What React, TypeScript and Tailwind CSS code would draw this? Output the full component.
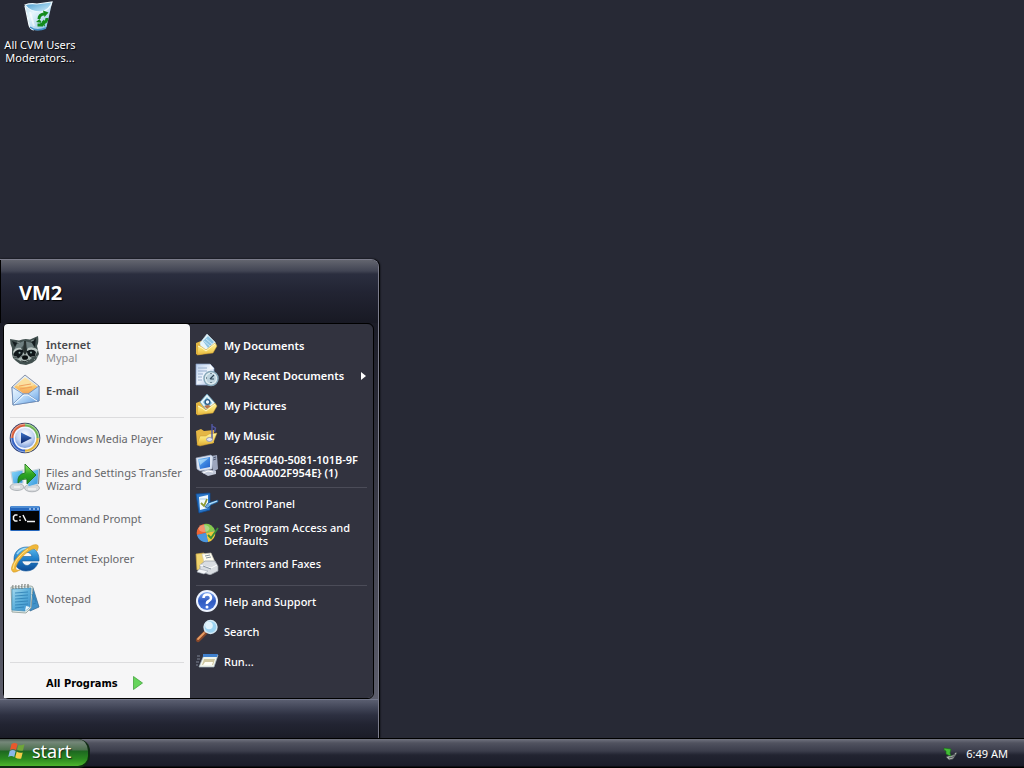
import type { ReactNode } from 'react';

type IconProps = { className?: string };

function Grad({ id, stops, diagonal }: { id: string; stops: string[]; diagonal?: boolean }) {
  return (
    <linearGradient id={id} x1="0" y1="0" x2={diagonal ? '1' : '0'} y2="1">
      {stops.map((color, i) => (
        <stop key={i} offset={i / (stops.length - 1)} stopColor={color} />
      ))}
    </linearGradient>
  );
}

function RecycleBinIcon() {
  return (
    <svg viewBox="0 0 32 32" className="size-8" aria-hidden="true">
      <defs>
        <Grad id="bin" stops={['#b5d9ee', '#e6f5fc', '#b4d8ee', '#6fb0dc']} diagonal />
        <Grad id="binIn" stops={['#3f93c9', '#8cc6e6', '#d5effb']} diagonal />
      </defs>
      <path d="m3 5 4 20q1 4 5 5 5 1 10-1 3-1 3-4l5-22Q18 12 3 5Z" fill="url(#bin)" />
      <path d="M3 5Q8 3 15 4L30 2Q28 10 19 12 8 12 3 5Z" fill="url(#binIn)" stroke="#eaf7fd" strokeWidth="1.200" />
      <path d="m3 6 4 19q1 4 5 5" fill="none" stroke="#f4fbfe" strokeWidth="1.200" />
      <path d="m8 12 4 14" stroke="#fff" strokeWidth="2" opacity=".6" />
      <path d="M8 27q6 5 16 1" fill="none" stroke="#428fc8" strokeWidth="1.500" />
      <g fill="none" stroke="#128a1b" strokeWidth="3">
        <path d="M17 19q0-4.500 5-5" />
        <path d="M25 18q0 4-4 5" />
        <path d="M21 25h-5.500" />
      </g>
      <path d="m21 10.500 5.500 2-4 4.500ZM22 19.500l-4 4 5 3ZM14 22l3.500-3 2.500 4Z" fill="#128a1b" />
    </svg>
  );
}

function RaccoonIcon() {
  return (
    <svg viewBox="0 0 32 32" className="size-8" aria-hidden="true">
      <path d="m1 5 9 1.500Q15 4 21 5.500L29 2q1 6-1 10l2 8-2 4-1 2-4 3-6 2-6-1-4-3-3-3-1-4v-6Q1 10 1 5Z" fill="#42504f" />
      <path d="m3 7 5 2-2 4Zm24-3-5 5 4 4Z" fill="#151d20" />
      <path d="m8 10 7-3 8 2 2 4-7 2-3-4-4 4-6 1Z" fill="#6f7f80" />
      <path d="M4 18q2-5 8-4l3 5-4 5-5-1Zm25-2q-4-4-10-2l-3 5 4 5 6-2Z" fill="#bcc7c4" />
      <path d="M5 19q3-5 9-3l1 3-5 5-5-1Zm13-2q6-3 9 1l-1 4-5 1-4-4Z" fill="#10171a" />
      <path d="m14 18 2-5 2 5 1 4 4 2-5 4h-5l-5-3 5-2Z" fill="#a9b5b2" />
      <path d="M15 7h2l1 11-2 3-2-3Z" fill="#28302f" />
      <ellipse cx="16" cy="23.500" rx="3" ry="2.300" fill="#090d0e" />
      <path d="M12 27q4 2 8-1" stroke="#2a3333" fill="none" />
      <circle cx="10.500" cy="18.800" r="1" fill="#8eaaa6" />
      <circle cx="22" cy="18.500" r="1" fill="#8eaaa6" />
      <path d="m5 24 4 1m-5-3 4 1m19 0 2-1m-4 4 1-1M8 8l3 1m11-2 3-1" stroke="#9ba8a6" strokeWidth=".7" />
    </svg>
  );
}

function MailIcon() {
  return (
    <svg viewBox="0 0 32 32" className="size-8" aria-hidden="true">
      <defs>
        <Grad id="mailBody" stops={['#f2f9ff', '#b9d9f8', '#5c9ae0']} diagonal />
        <Grad id="mailPaper" stops={['#fff4c8', '#fbc56b', '#ee9b54']} />
      </defs>
      <path d="m3 13 13-12 14 11v15L4 31Z" fill="#dceafa" stroke="#8b93a5" />
      <path d="m5 13 11-10 13 10-11 9Z" fill="url(#mailPaper)" />
      <path d="m7 12 9-8 10 7-9 2Z" fill="#fbe0a0" />
      <path d="m10 12 12-2M11 15l12-2" stroke="#efa05e" />
      <path d="m3 13 11 7h5l11-8v15L4 31Z" fill="url(#mailBody)" stroke="#6486b6" strokeWidth=".8" />
      <path d="m4 30 10-10h5l10 7" fill="none" stroke="#7f9fca" />
      <path d="m5 30 10-9h4l9 6" fill="none" stroke="#f7fcff" strokeWidth="1" />
    </svg>
  );
}

function MediaPlayerIcon() {
  return (
    <svg viewBox="0 0 32 32" className="size-8" aria-hidden="true">
      <defs>
        <radialGradient id="wmp" cx=".5" cy=".35" r=".7">
          <stop offset="0" stopColor="#fff" />
          <stop offset=".55" stopColor="#c3d4f3" />
          <stop offset="1" stopColor="#5f88d2" />
        </radialGradient>
        <Grad id="wmpPlay" stops={['#3d72c8', '#0b2468']} />
      </defs>
      <circle cx="16" cy="16" r="15.300" fill="#283a6c" />
      <g fill="none" strokeWidth="3.200">
        <path d="M3.200 16A12.800 12.800 0 0 1 16 3.200" stroke="#d95f3b" />
        <path d="M16 3.200A12.800 12.800 0 0 1 28.800 16" stroke="#6fb555" />
        <path d="M28.800 16A12.800 12.800 0 0 1 16 28.800" stroke="#e3b43a" />
        <path d="M16 28.800A12.800 12.800 0 0 1 3.200 16" stroke="#3764c4" />
      </g>
      <circle cx="16" cy="16" r="14" fill="none" stroke="#fff" strokeWidth=".8" opacity=".6" />
      <circle cx="16" cy="16" r="10.800" fill="url(#wmp)" stroke="#f5f8ff" strokeWidth="1.400" />
      <path d="M12 10.500v11L23 16Z" fill="url(#wmpPlay)" />
    </svg>
  );
}

function TransferIcon() {
  return (
    <svg viewBox="0 0 32 32" className="size-8" aria-hidden="true">
      <defs>
        <Grad id="screenA" stops={['#8fdcfa', '#2f93dc']} diagonal />
        <Grad id="arrowG" stops={['#9aef6c', '#2fa524', '#158a1c']} />
      </defs>
      <ellipse cx="8" cy="25" rx="7" ry="3.500" fill="#d8dadd" stroke="#989da4" strokeWidth=".7" />
      <path d="m2 10 12-2v13L4 22Z" fill="url(#screenA)" stroke="#c9d3dc" strokeWidth="1.200" />
      <ellipse cx="23" cy="26" rx="7.500" ry="3.800" fill="#d8dadd" stroke="#989da4" strokeWidth=".7" />
      <path d="m17 10 13-3-1 15-10 3Z" fill="url(#screenA)" stroke="#c9d3dc" strokeWidth="1.200" />
      <path d="M30.500 7 29.500 22" stroke="#7b828b" />
      <path d="M5 25h6m8 2h8" stroke="#fff" strokeWidth="1.200" />
      <path d="M9 21q-1-9 7-10V6V2l11 11-9 9v-5q-5-1-9 4Z" fill="url(#arrowG)" stroke="#1c751c" strokeWidth=".9" />
    </svg>
  );
}

function CommandIcon() {
  return (
    <svg viewBox="0 0 32 32" className="size-8" aria-hidden="true">
      <rect x="1" y="4" width="30" height="25" rx="1.500" fill="#2667bd" />
      <path d="M2 5h28" stroke="#5d9add" strokeWidth="1.500" />
      <path d="M20 7h2m2 0h2m2 0h2" stroke="#a9ccf2" strokeWidth="1.400" />
      <rect x="2" y="9" width="28" height="19" fill="#030405" />
      <path d="M8.500 13H6L4.500 14.500v3L6 19h2.500M11 14v1.500m0 2V19m3-6 3 6m1 .5h8" fill="none" stroke="#f3f4f5" strokeWidth="1.500" />
    </svg>
  );
}

function ExplorerIcon() {
  return (
    <svg viewBox="0 0 32 32" className="size-8" aria-hidden="true">
      <defs>
        <Grad id="ieG" stops={['#5fbdee', '#2180ca', '#0d4a94']} />
      </defs>
      <path fillRule="evenodd" d="M18 5c7 0 12 5 12 12v2H13c1 5 7 6 9 2h7c-2 5-6 8-12 8C10 29 5 24 5 17S10 5 18 5Zm-5 9.500h10c-1-5.500-9-5.500-10 0Z" fill="url(#ieG)" stroke="#165d9f" strokeWidth=".6" />
      <path d="M8 12q5-7 13-5" fill="none" stroke="#c6f0ff" strokeWidth="1.500" opacity=".7" />
      <path d="M28 9q4-8-4-6Q14 7 6 18 0 27 4 30q2 1 7-2-5 1-4-3 1-5 8-12Q26 3 28 9Z" fill="#f0b83a" stroke="#cf9426" strokeWidth=".5" />
      <path d="M4 27Q5 17 19 7" stroke="#ffe48a" fill="none" />
    </svg>
  );
}

function NotepadIcon() {
  return (
    <svg viewBox="0 0 32 32" className="size-8" aria-hidden="true">
      <defs>
        <Grad id="noteG" stops={['#a9dcf0', '#5aaeda', '#3c8ecb']} diagonal />
      </defs>
      <path d="m15 7 9-1 6 19-9 4Z" fill="#4191c8" stroke="#3a6f97" strokeWidth=".8" />
      <path d="m2 5 20-1 2 1-2 21-5 5-14-1Z" fill="#dfe9e6" stroke="#8d9b96" strokeWidth=".8" />
      <path d="m3 7 19-1-1 19-5 4-13-1Z" fill="url(#noteG)" stroke="#3c8ab6" strokeWidth=".7" />
      <path d="m6 11 13-1M6 14l13-1M6 17l13-1M6 20l13-1M6 23l13-1M6 26l9-1M23 12l2 6m-1-8 3 10m-3 2 3-1" stroke="#2c7db2" strokeWidth=".8" />
      <path d="m16 29 1-5 4 1Z" fill="#e7f7ff" />
      <path d="M4 7V3m3 4V3m3 4V3m3 4V2m3 4V2m3 4V2" stroke="#777d77" strokeWidth="1.200" />
      <path d="M5 6V3m3 3V3m3 3V3m3 3V3m3 3V3" stroke="#fff" strokeWidth=".7" />
    </svg>
  );
}

function FolderBase({ id, children }: { id: string; children: ReactNode }) {
  return (
    <svg viewBox="0 0 24 24" className="size-6" aria-hidden="true">
      <defs>
        <Grad id={id} stops={['#fff3a0', '#f9de6c', '#e3b43c']} />
      </defs>
      <path d="m1 10 5-2 3 1 9 1v9L4 22l-3-1Z" fill="#e2b643" />
      {children}
      <path d="m2 22 1-10 4 2 4 3 9-7 2 3-4 7Z" fill={`url(#${id})`} stroke="#c9962a" strokeWidth=".5" />
      <path d="m3 13 4 2 4 3 9-7" fill="none" stroke="#fffbd0" strokeWidth=".9" />
    </svg>
  );
}

function DocumentsIcon() {
  return (
    <FolderBase id="fDocs">
      <path d="m5 10 7-9 8 8 1 3-10 6-5-4Z" fill="#e6f5fb" stroke="#cfe6f0" strokeWidth=".6" />
      <path d="m8 8 5-5 6 6-6 6Z" fill="#8cc3e2" />
      <path d="m9 8 6 5m-4-7 6 5" stroke="#d5eefa" strokeWidth=".8" />
    </FolderBase>
  );
}

function PicturesIcon() {
  return (
    <FolderBase id="fPics">
      <path d="m5 9 7-8 8 9-8 8Z" fill="#e7f6fb" stroke="#649eb9" strokeWidth=".8" />
      <path d="m8 9 4-5 5 6-5 5Z" fill="#78b7d6" />
      <circle cx="12.500" cy="9" r="2.300" fill="#f2faff" stroke="#315e87" strokeWidth="1.300" />
      <path d="m9 13 4-1 3 1-4 3Z" fill="#b5754b" />
    </FolderBase>
  );
}

function MusicIcon() {
  return (
    <svg viewBox="0 0 24 24" className="size-6" aria-hidden="true">
      <defs>
        <Grad id="fMusic" stops={['#fff7a8', '#f7db66', '#dba932']} />
      </defs>
      <path d="m1 8 5-2 3 2 10-1v13L5 22l-3-1Z" fill="#e5b745" />
      <path d="m2 22 3-9h6l3-2 8-1-4 10-13 3Z" fill="url(#fMusic)" stroke="#c9962a" strokeWidth=".5" />
      <path d="M17 1v15M17 3l3.500 2-1 4" fill="none" stroke="#5257a5" strokeWidth="1.400" />
      <ellipse cx="14.500" cy="16.500" rx="3" ry="2" fill="#dfe3ee" stroke="#898ab0" strokeWidth=".8" />
    </svg>
  );
}

function RecentIcon() {
  return (
    <svg viewBox="0 0 24 24" className="size-6" aria-hidden="true">
      <defs>
        <Grad id="recent" stops={['#b7cdec', '#eef4fd', '#9db5dc']} diagonal />
      </defs>
      <path d="M1 1h14l4 4v17H1Z" fill="url(#recent)" stroke="#849cc1" strokeWidth=".7" />
      <path d="M15 1v5h4" fill="#f8fcff" />
      <path d="M3 5h9M3 8h9M3 11h5M3 14h4M3 17h4" stroke="#96adcc" />
      <circle cx="16" cy="15.500" r="7" fill="#e1edf1" stroke="#87a8ba" strokeWidth="1.500" />
      <circle cx="16" cy="15.500" r="4.800" fill="#bcd2dd" />
      <path d="m15 16 4-4m-4 4h4M16 10v1m-5 4h1m4 4v1" stroke="#2f4657" strokeWidth="1.100" />
    </svg>
  );
}

function ComputerIcon() {
  return (
    <svg viewBox="0 0 24 24" className="size-6" aria-hidden="true">
      <defs>
        <Grad id="pc" stops={['#9ad6ff', '#3f88e2', '#1f5fc8']} diagonal />
      </defs>
      <path d="m16 3 6-1 1 14-5 3Z" fill="#9da6bd" />
      <path d="m18 5 3-1m-3 3 3-1" stroke="#4d5872" />
      <path d="m6 19 6-3 9 2v3l-8 2Z" fill="#c3cad9" />
      <path d="m1 5 15-3 2 2-1 12-12 2-3-2Z" fill="#dbe3f1" stroke="#9aa8c1" strokeWidth=".6" />
      <path d="m3 6 12-2v10L5 16Z" fill="url(#pc)" />
      <path d="m4 7 10-2-9 7Z" fill="#c6eeff" opacity=".6" />
      <path d="m8 20 5-2 5 1" stroke="#fff" fill="none" />
    </svg>
  );
}

function ControlPanelIcon() {
  return (
    <svg viewBox="0 0 24 24" className="size-6" aria-hidden="true">
      <path d="m1 3 14-1v17L4 22Z" fill="#2974c5" stroke="#0e4b96" strokeWidth=".8" />
      <path d="m4 6 9-2v13l-8 2Z" fill="#f0f9ff" />
      <path d="M5 8h7" stroke="#a8cbe3" />
      <path d="m6 12 3 3 3-7" fill="none" stroke="#8c9932" strokeWidth="1.800" />
      <path d="m10 16 3-4 10-3v2l-7 3-3 3Z" fill="#6aaade" stroke="#154f88" strokeWidth=".7" />
      <path d="m14 13 8-3" stroke="#bce6ff" />
    </svg>
  );
}

function AccessIcon() {
  return (
    <svg viewBox="0 0 24 24" className="size-6" aria-hidden="true">
      <circle cx="11" cy="12" r="9" fill="#3278d4" />
      <path d="M11 12 9 3A9 9 0 0 0 2 14Z" fill="#ed6532" />
      <path d="M11 12 9 3A9 9 0 0 1 20 10Z" fill="#86c84e" />
      <path d="m11 12 9-2a9 9 0 0 1-7 11Z" fill="#f1c93c" />
      <path d="m11 12 2 9A9 9 0 0 1 2 14Z" fill="#4b96dd" />
      <ellipse cx="9" cy="7.500" rx="5.500" ry="3.500" fill="#fff" opacity=".3" />
      <path d="m13 14 3 3 7-10" fill="none" stroke="#3a9139" strokeWidth="1.800" />
    </svg>
  );
}

function PrinterIcon() {
  return (
    <svg viewBox="0 0 24 24" className="size-6" aria-hidden="true">
      <path d="m1 3 8-1 3 5-1 9-9 3Z" fill="#efd36f" stroke="#c8a847" strokeWidth=".7" />
      <path d="m7 3 9-1 4 9-10 4Z" fill="#fffdf0" stroke="#c9c8b8" strokeWidth=".6" />
      <path d="m5 14 5-4h10l3 5v5l-8 4-10-4Z" fill="#d9dde2" stroke="#90969f" strokeWidth=".7" />
      <path d="m5 14 11 3 6-3" stroke="#fff" fill="none" />
      <path d="m4 18 9 2-4 3-7-2Z" fill="#f5f7fa" stroke="#a3abb5" strokeWidth=".6" />
      <path d="m10 5 5-1m-4 3 5-1M8 15l8 3" stroke="#8895a0" />
    </svg>
  );
}

function HelpIcon() {
  return (
    <svg viewBox="0 0 24 24" className="size-6" aria-hidden="true">
      <defs>
        <Grad id="helpG" stops={['#7da8f2', '#2f59c0', '#4674d8']} />
      </defs>
      <circle cx="12" cy="12" r="11" fill="#eef4ff" />
      <circle cx="12" cy="12" r="9" fill="url(#helpG)" />
      <path d="M8.500 9q0-3.500 3.700-3.500T16 9q0 2-2.200 3T12 15" fill="none" stroke="#fff" strokeWidth="2.500" />
      <circle cx="12" cy="18" r="1.500" fill="#fff" />
    </svg>
  );
}

function SearchIcon() {
  return (
    <svg viewBox="0 0 24 24" className="size-6" aria-hidden="true">
      <path d="m10 14-7 7" stroke="#87482a" strokeWidth="4.200" strokeLinecap="round" />
      <path d="m9 14-6 6" stroke="#e99e64" strokeWidth="1.800" strokeLinecap="round" />
      <path d="m12 11-2 2" stroke="#d5d8dd" strokeWidth="3" />
      <circle cx="15.500" cy="8" r="6.500" fill="#9bd3f2" stroke="#d4e9f4" strokeWidth="1.400" />
      <circle cx="14" cy="6.500" r="3.800" fill="#f2fcff" opacity=".8" />
    </svg>
  );
}

function RunIcon() {
  return (
    <svg viewBox="0 0 24 24" className="size-6" aria-hidden="true">
      <path d="M2 7h3M2 10h3M1 13h3M1 16h2" stroke="#7c8494" />
      <path d="m9 6 14 0-4 12H4Z" fill="#f0f4ea" stroke="#a6b6c0" strokeWidth=".7" />
      <path d="m8 5 15 0-1 3H8Z" fill="#4080cc" />
      <path d="m9 10 11 0-2 6H7Z" fill="#cfc7a0" />
      <path d="m10 13 8 0-1 3H8Z" fill="#fffef5" />
    </svg>
  );
}

function WindowsLogo({ className }: IconProps) {
  return (
    <svg viewBox="0 0 18 18" className={className} aria-hidden="true">
      <path d="M3.500 2q3-2 6 0L8 8Q5 6 2 8Z" fill="#e8582c" />
      <path d="M10.500 3q3 1 6-1l-1.500 6.500q-3 1-6-1Z" fill="#6fa53a" />
      <path d="M1.700 9q3-2 6 0l-1.500 6q-3-2-6 0Z" fill="#8ab8e8" />
      <path d="M8.700 9.500q3 2 6 1L13.200 16.500q-3 1-6-1Z" fill="#f5cd49" />
    </svg>
  );
}

function TrayIcon() {
  return (
    <svg viewBox="0 0 16 16" className="size-4" aria-hidden="true">
      <path d="m6 10 5-1 3-3 1 1-4 6-4 1-3-3Z" fill="#a9aeac" stroke="#3a4042" strokeWidth=".7" />
      <path d="m7 12 4-1 2-3" fill="none" stroke="#53595a" />
      <path d="m2 2 7 1-1 4 1 3-3-1-2-1 0-3-2-1Z" fill="#43bc36" stroke="#1b681b" strokeWidth=".6" />
    </svg>
  );
}

const recentPrograms: { icon: ReactNode; label: string }[] = [
  { icon: <MediaPlayerIcon />, label: 'Windows Media Player' },
  { icon: <TransferIcon />, label: 'Files and Settings Transfer Wizard' },
  { icon: <CommandIcon />, label: 'Command Prompt' },
  { icon: <ExplorerIcon />, label: 'Internet Explorer' },
  { icon: <NotepadIcon />, label: 'Notepad' },
];

type Place = { icon: ReactNode; label: ReactNode; submenu?: boolean };

const places: Place[] = [
  { icon: <DocumentsIcon />, label: 'My Documents' },
  { icon: <RecentIcon />, label: 'My Recent Documents', submenu: true },
  { icon: <PicturesIcon />, label: 'My Pictures' },
  { icon: <MusicIcon />, label: 'My Music' },
  { icon: <ComputerIcon />, label: <>::{'{'}645FF040-5081-101B-9F<br />08-00AA002F954E{'}'} (1)</> },
];

const settings: Place[] = [
  { icon: <ControlPanelIcon />, label: 'Control Panel' },
  { icon: <AccessIcon />, label: 'Set Program Access and Defaults' },
  { icon: <PrinterIcon />, label: 'Printers and Faxes' },
];

const tools: Place[] = [
  { icon: <HelpIcon />, label: 'Help and Support' },
  { icon: <SearchIcon />, label: 'Search' },
  { icon: <RunIcon />, label: 'Run...' },
];

function ProgramRow({ icon, children }: { icon: ReactNode; children: ReactNode }) {
  return (
    <button type="button" className="flex h-10 w-full items-center gap-[5px] pb-px pl-[5px] text-left">
      <span className="shrink-0 pb-px">{icon}</span>
      <span>{children}</span>
    </button>
  );
}

function PlaceGroup({ items, bold }: { items: Place[]; bold?: boolean }) {
  return (
    <div className={bold ? 'font-semibold' : 'font-medium'}>
      {items.map((item, i) => (
        <button key={i} type="button" className="flex h-[30px] w-full items-center gap-[5px] px-[5px] pb-px text-left">
          <span className="shrink-0 pb-px">{item.icon}</span>
          <span className="flex-1">{item.label}</span>
          {item.submenu && (
            <svg viewBox="0 0 5 8" className="mr-0.5 h-2 w-[5px]" aria-hidden="true">
              <path d="M0 0v8l5-4Z" fill="#fff" />
            </svg>
          )}
        </button>
      ))}
    </div>
  );
}

function StartMenu() {
  return (
    <nav
      aria-label="Start menu"
      className="flex w-[380px] flex-col rounded-tr-lg border-r border-black bg-[#1b1c29] text-[11px] leading-[13px] shadow-[0_0_2px_#000]"
    >
      <div className="flex flex-col rounded-tr-lg border-t border-r border-[#7b7c8b]">
        <header className="flex h-[63px] items-center rounded-tr-md border-l border-black bg-[linear-gradient(to_bottom,#63656f_0,#414453_11px,#2b2e3f_14px,#222433_32px,#181923_100%)] px-[18px] pt-[3px]">
          <h2 className="text-xl font-bold text-white [text-shadow:1px_1px_1px_#000]">VM2</h2>
        </header>
        <div className="flex bg-[linear-gradient(to_bottom,#1b1c27,#5c5d6b)] pr-1 pl-[3px]">
          <div className="flex w-full rounded-md border border-black">
            <section className="flex w-[186px] flex-col rounded-t bg-[#f6f6f7] pt-[7px] text-[#66676a]">
              <ProgramRow icon={<RaccoonIcon />}>
                <span className="block font-semibold text-[#48494c]">Internet</span>
                <span className="block text-[#8c8d90]">Mypal</span>
              </ProgramRow>
              <ProgramRow icon={<MailIcon />}>
                <span className="font-semibold text-[#48494c]">E-mail</span>
              </ProgramRow>
              <hr className="mx-1.5 mt-1.5 mb-px border-[#dcdcde]" />
              {recentPrograms.map((p) => (
                <ProgramRow key={p.label} icon={p.icon}>
                  {p.label}
                </ProgramRow>
              ))}
              <hr className="mx-1.5 mt-[43px] border-[#dcdcde]" />
              <button
                type="button"
                className="flex h-[35px] items-center gap-[15px] pt-[5px] pl-[42px] font-['DejaVu_Sans_Condensed','Noto_Sans',sans-serif] font-bold text-black"
              >
                All Programs
                <svg viewBox="0 0 10 14" className="h-3.5 w-2.5" aria-hidden="true">
                  <path d="M.5.500v13l9-6.500Z" fill="#66d45b" stroke="#43a53d" strokeWidth=".8" />
                </svg>
              </button>
            </section>
            <section className="flex-1 rounded-r-md bg-[#32333f] pt-[7px] text-white">
              <PlaceGroup items={places} bold />
              <hr className="mx-1.5 mt-1.5 mb-px border-[#4b4c58]" />
              <PlaceGroup items={settings} />
              <hr className="mx-1.5 mt-1.5 mb-px border-[#4b4c58]" />
              <PlaceGroup items={tools} />
            </section>
          </div>
        </div>
        <footer className="h-[39px] border-t border-[#73778a] bg-[linear-gradient(to_bottom,#5a5e70_0,#414557_8px,#2d3041_15px,#222432_24px,#1b1c27_100%)]" />
      </div>
    </nav>
  );
}

export default function App() {
  return (
    <div className="flex min-h-screen flex-col bg-[#272935] font-['Noto_Sans','Open_Sans',sans-serif] select-none">
      <main className="flex flex-1 flex-col items-start justify-between">
        <button type="button" className="flex w-20 flex-col items-center gap-1.5 text-[11px] leading-[13px] text-white [text-shadow:1px_1px_1px_#000]">
          <span className="pr-1">
            <RecycleBinIcon />
          </span>
          <span>All CVM Users Moderators...</span>
        </button>
        <StartMenu />
      </main>
      <footer className="flex h-[30px] items-center justify-between border-t border-black bg-[linear-gradient(to_bottom,#71737f_0,#50525f_4px,#3b3d4b_12px,#222431_16px,#1b1c29_27px,#000_28px)] text-white">
        <button
          type="button"
          className="flex h-full w-[90px] items-center gap-1.5 rounded-r-xl border-r-2 border-b-2 border-[#102b14] bg-[linear-gradient(to_bottom,#4e5d55_0,#758779_3px,#4c704d_11px,#1d6720_12px,#2b8a20_20px,#4cb52c_100%)] pb-1 pl-2 text-lg leading-6 [text-shadow:1px_1px_1px_#183018]"
        >
          <WindowsLogo className="size-[18px]" />
          start
        </button>
        <div className="flex items-center gap-2 pr-4 text-[11px] leading-[13px]">
          <TrayIcon />
          <time>6:49 AM</time>
        </div>
      </footer>
    </div>
  );
}
